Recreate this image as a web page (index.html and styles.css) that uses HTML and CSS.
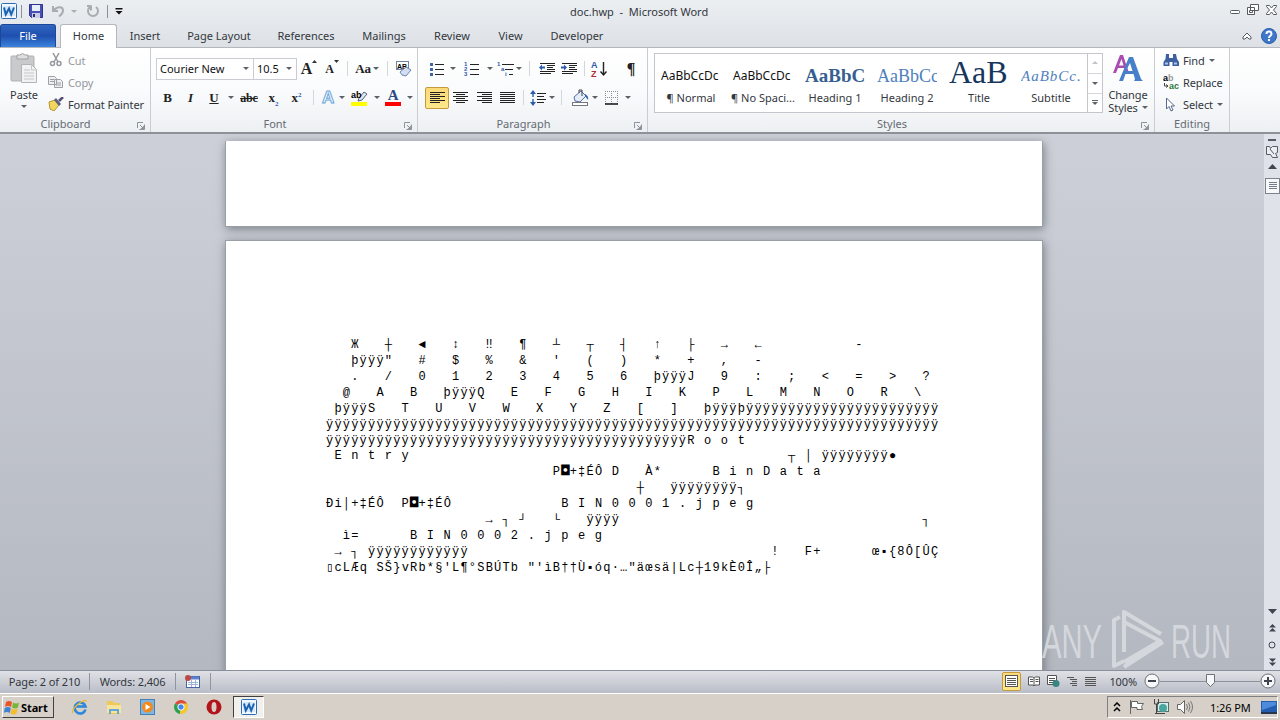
FILE: index.html
```html
<!DOCTYPE html>
<html lang="en">
<head>
    <meta charset="UTF-8">
    <title>doc.hwp - Microsoft Word</title>
    <link rel="stylesheet" href="styles.css">
</head>
<body>
    <svg class="defs" width="0" height="0">
        <symbol id="word" viewBox="0 0 16 16">
            <rect x="0.5" y="0.5" width="15" height="15" rx="1" fill="#f4f9ff" stroke="#2b6cb5"/>
            <path d="M2 3h11l1 1v9H2z" fill="#d5e8fa"/>
            <path d="M3 4.500l1.800 7L8 5.500l2.200 6L13 4.500" fill="none" stroke="#1a62b3" stroke-width="2"/>
        </symbol>
        <symbol id="launcher" viewBox="0 0 8 8">
            <path d="M0.500 6V0.500H6M3 3l3 3M7.500 2.500v5h-5" fill="none" stroke="#8d939b"/>
            <path d="M7 3.500V7H3.500z" fill="#8d939b"/>
        </symbol>
    </svg>

    <div class="titlebar">
        <svg class="app" width="16" height="16"><use href="#word"/></svg>
        <i class="vbar"></i>
        <svg class="save" width="14" height="14" viewBox="0 0 14 14">
            <path d="M0.500 0.500h13v13h-11l-2-2z" fill="#4750b5" stroke="#30358c"/>
            <rect x="3" y="1" width="8" height="6" fill="#e9effa"/>
            <rect x="3" y="9" width="8" height="5" fill="#c8cbe4"/>
            <rect x="4" y="10" width="2" height="3" fill="#282d75"/>
        </svg>
        <svg class="undo" width="14" height="14" viewBox="0 0 14 14">
            <path d="M1 2v5h5M1.500 6.500C5 2 11 2 11 6.500c0 3-2 4.500-4 6" fill="none" stroke="#a9adb2" stroke-width="2"/>
        </svg>
        <i class="caret light"></i>
        <svg class="redo" width="14" height="14" viewBox="0 0 14 14">
            <path d="M4 3a5 5 0 1 0 6 0M5 2h-4M5 1.500v5" fill="none" stroke="#a9adb2" stroke-width="2"/>
        </svg>
        <i class="vbar"></i>
        <svg width="8" height="7" viewBox="0 0 8 7"><path d="M0.500 0h7v1.500h-7zM0.500 3h7L4 6.500z" fill="#111"/></svg>
        <div class="title">doc.hwp&nbsp; - &nbsp;Microsoft Word</div>
        <svg class="win" width="48" height="12" viewBox="0 0 48 12">
            <g fill="#fff" stroke="#555a63">
                <rect x="1.500" y="6.500" width="9" height="3" rx="1"/>
                <path d="M21.500 0.500h8v6h-8zM18.500 3.500h7v7h-7zM20.500 6.500h3v2h-3z"/>
                <path d="M37.500 1.500h3l2 2.500 2-2.500h3v1l-3 3.500 3 3.500v1h-3l-2-2.500-2 2.500h-3v-1l3-3.500-3-3.500z"/>
            </g>
        </svg>
    </div>

    <div class="tabs">
        <div class="file">File</div>
        <div class="tab active">Home</div>
        <div class="tab insert">Insert</div>
        <div class="tab layout">Page Layout</div>
        <div class="tab refs">References</div>
        <div class="tab mail">Mailings</div>
        <div class="tab review">Review</div>
        <div class="tab view">View</div>
        <div class="tab dev">Developer</div>
        <div class="tab-end">
            <svg width="10" height="8" viewBox="0 0 10 8"><path d="M1 5l4-4 4 4v2H7L5 5 3 7H1z" fill="#fff" stroke="#555a63"/></svg>
            <svg width="16" height="16" viewBox="0 0 16 16">
                <circle cx="8" cy="8" r="7.500" fill="#3f77cb" stroke="#2b5dab"/>
                <path d="M5.500 6c0-3.300 5-3.300 5 0 0 1.800-2.500 1.800-2.500 4M8 11v2" fill="none" stroke="#fff" stroke-width="2"/>
            </svg>
        </div>
    </div>

    <div class="ribbon">
        <div class="group clipboard">
            <div class="body">
                <div class="paste">
                    <svg width="28" height="32" viewBox="0 0 28 32">
                        <rect x="1" y="3" width="23" height="25" rx="1" fill="#c9cacc" stroke="#b0b1b4"/>
                        <path d="M7 2h3q2.500-3 5 0h3v4H7z" fill="#dedfe1" stroke="#a0a1a4"/>
                        <path d="M11.500 11.500h10l5 5v13h-15z" fill="#f2f2f3" stroke="#b3b4b7"/>
                        <path d="M14 17h6M14 20h10M14 23h10M14 26h10M21.500 12v5h5" fill="none" stroke="#c5c6c9"/>
                    </svg>
                    <span>Paste</span>
                    <i class="caret"></i>
                </div>
                <div class="clip-list">
                    <div class="off">
                        <svg width="16" height="14" viewBox="0 0 16 14"><g fill="none" stroke="#95989d" stroke-width="1.500"><path d="M5 0l5 9M11 0L6 9"/><circle cx="4.500" cy="10.500" r="2"/><circle cx="11" cy="10.500" r="2"/></g></svg>
                        Cut
                    </div>
                    <div class="off">
                        <svg width="16" height="14" viewBox="0 0 16 14"><g fill="#f0f0f1" stroke="#9da0a5"><path d="M0.500 1.500h6l2 2v6h-8zM6.500 4.500h6l2 2v6h-8z"/><path d="M2 4.500h4M2 6.500h4M8 8h5M8 10h5"/></g></svg>
                        Copy
                    </div>
                    <div>
                        <svg width="16" height="14" viewBox="0 0 16 14"><path d="M1 5l6-2 4 5-5 6-4-2z" fill="#f3d65c" stroke="#b79431"/><path d="M6 3l2-2 5 6-2 2z" fill="#5b5e85"/><path d="M11 4l4-4" stroke="#554f74" stroke-width="2.500"/></svg>
                        Format Painter
                    </div>
                </div>
            </div>
            <div class="caption">Clipboard<svg width="8" height="8"><use href="#launcher"/></svg></div>
        </div>

        <div class="group font">
            <div class="body rows">
                <div class="row font-top">
                    <div class="combo">Courier New<i class="caret"></i></div>
                    <div class="combo">10.5<i class="caret"></i></div>
                    <span class="glyph grow">A<svg width="5" height="3" viewBox="0 0 5 3"><path d="M0 3h5L2.500 0z" fill="#333"/></svg></span>
                    <span class="glyph shrink">A<svg width="5" height="3" viewBox="0 0 5 3"><path d="M0 0h5L2.500 3z" fill="#333"/></svg></span>
                    <i class="sep"></i>
                    <span class="glyph case">Aa<i class="caret"></i></span>
                    <i class="sep"></i>
                    <svg width="17" height="17" viewBox="0 0 17 17">
                        <rect x="1.500" y="1.500" width="12" height="8" fill="#fff" stroke="#6f85a7"/>
                        <text x="2" y="8.500" class="tiny">AB</text>
                        <path d="M5 12l6-5 5 3-5 6-4-1z" fill="#d3dff1" stroke="#6c85b3"/>
                    </svg>
                </div>
                <div class="row font-bottom">
                    <span class="glyph bold">B</span>
                    <span class="glyph italic">I</span>
                    <span class="glyph under">U</span>
                    <i class="caret"></i>
                    <span class="glyph strike">abc</span>
                    <span class="glyph script">x<sub>2</sub></span>
                    <span class="glyph script">x<sup>2</sup></span>
                    <i class="sep"></i>
                    <span class="glyph effects">A</span>
                    <i class="caret"></i>
                    <svg width="17" height="18" viewBox="0 0 17 18">
                        <path d="M8 9l5-6 3 2-5 6-4 1z" fill="#dfe5ee" stroke="#56627a"/>
                        <text x="0" y="9" class="ab">ab</text>
                        <rect x="0" y="13" width="16" height="4" fill="#ff0"/>
                    </svg>
                    <i class="caret"></i>
                    <span class="glyph color">A</span>
                    <i class="caret"></i>
                </div>
            </div>
            <div class="caption">Font<svg width="8" height="8"><use href="#launcher"/></svg></div>
        </div>

        <div class="group para">
            <div class="body rows">
                <div class="row para-top">
                    <svg width="14" height="14" viewBox="0 0 14 14"><path d="M5 2.500h9M5 7.500h9M5 12.500h9" stroke="#222"/><path d="M0 1h3v3H0zM0 6h3v3H0zM0 11h3v3H0z" fill="#40649f"/></svg>
                    <i class="caret"></i>
                    <svg width="15" height="15" viewBox="0 0 15 15"><path d="M6 3.500h9M6 8.500h9M6 13.500h9" stroke="#222"/><text x="0" y="5" class="num">1</text><text x="0" y="10" class="num">2</text><text x="0" y="15" class="num">3</text></svg>
                    <i class="caret"></i>
                    <svg width="17" height="15" viewBox="0 0 17 15"><path d="M5 3.500h12M8 8.500h8M12 13.500h4" stroke="#222"/><text x="0" y="5" class="num">1</text><text x="4" y="10" class="num">a</text><text x="8" y="15" class="num">i</text></svg>
                    <i class="caret"></i>
                    <i class="sep"></i>
                    <svg width="16" height="13" viewBox="0 0 16 13"><path d="M1 1.500h15M8 3.500h8M8 5.500h6M8 7.500h8M1 9.500h15M1 11.500h11" stroke="#222"/><path d="M0 5.500l3-3v2h3v2H3v2z" fill="#2c5cab"/></svg>
                    <svg width="16" height="13" viewBox="0 0 16 13"><path d="M1 1.500h15M8 3.500h8M8 5.500h6M8 7.500h8M1 9.500h15M1 11.500h11" stroke="#222"/><path d="M6 5.500l-3-3v2H0v2h3v2z" fill="#2c5cab"/></svg>
                    <i class="sep"></i>
                    <svg width="16" height="16" viewBox="0 0 16 16"><text x="0" y="7" class="az a">A</text><text x="0" y="16" class="az z">Z</text><path d="M12.500 1v12M9.500 10.500l3 3.500 3-3.500" fill="none" stroke="#222" stroke-width="1.400"/></svg>
                    <i></i>
                    <span class="glyph pilcrow">¶</span>
                </div>
                <div class="row para-bottom">
                    <span class="picked"><svg width="15" height="13" viewBox="0 0 15 13"><path d="M0 1.500h15M0 3.500h10M0 5.500h15M0 7.500h10M0 9.500h15M0 11.500h10" stroke="#222"/></svg></span>
                    <svg width="15" height="13" viewBox="0 0 15 13"><path d="M0 1.500h15M3 3.500h9M0 5.500h15M3 7.500h9M0 9.500h15M3 11.500h9" stroke="#222"/></svg>
                    <svg width="15" height="13" viewBox="0 0 15 13"><path d="M0 1.500h15M5 3.500h10M0 5.500h15M5 7.500h10M0 9.500h15M5 11.500h10" stroke="#222"/></svg>
                    <svg width="15" height="13" viewBox="0 0 15 13"><path d="M0 1.500h15M0 3.500h15M0 5.500h15M0 7.500h15M0 9.500h15M0 11.500h15" stroke="#222"/></svg>
                    <i class="sep"></i>
                    <svg width="16" height="16" viewBox="0 0 16 16"><path d="M7 3.500h9M7 6.500h7M7 9.500h9M7 12.500h7" stroke="#222"/><path d="M3 0l3 4H0zM3 16l3-4H0zM2.300 4h1.400v3H2.300zM2.300 9h1.400v3H2.300z" fill="#2c5cab"/></svg>
                    <i class="caret"></i>
                    <i class="sep"></i>
                    <svg width="17" height="17" viewBox="0 0 17 17"><path d="M2 8l7-6 5 5-6 6-5-1z" fill="#e4edf9" stroke="#53709f"/><path d="M7 4V1h3v6" fill="none" stroke="#444"/><path d="M13 5q4 2 3 6l-3-4z" fill="#2f62b3"/><rect x="0.500" y="13.500" width="15" height="3" fill="#fff" stroke="#777"/></svg>
                    <i class="caret"></i>
                    <svg width="14" height="14" viewBox="0 0 14 14"><path d="M0.500 0v13M6.500 0v13M12.500 0v13M0 0.500h13M0 6.500h13" stroke="#8b8f95" stroke-dasharray="1 1"/><path d="M0 13h13" stroke="#111" stroke-width="1.500"/></svg>
                    <i class="caret"></i>
                </div>
            </div>
            <div class="caption">Paragraph<svg width="8" height="8"><use href="#launcher"/></svg></div>
        </div>

        <div class="group styles">
            <div class="body">
                <div class="gallery">
                    <div class="style"><b class="s-normal">AaBbCcDc</b><span>¶ Normal</span></div>
                    <div class="style"><b class="s-normal">AaBbCcDc</b><span>¶ No Spaci...</span></div>
                    <div class="style"><b class="s-h1">AaBbCc</b><span>Heading 1</span></div>
                    <div class="style"><b class="s-h2">AaBbCc</b><span>Heading 2</span></div>
                    <div class="style"><b class="s-title">AaB</b><span>Title</span></div>
                    <div class="style"><b class="s-sub">AaBbCc.</b><span>Subtitle</span></div>
                    <div class="scroller">
                        <div><i class="caret up"></i></div>
                        <div><i class="caret"></i></div>
                        <div class="more"><i class="caret"></i></div>
                    </div>
                </div>
                <div class="change">
                    <svg width="30" height="29" viewBox="0 0 30 29">
                        <path d="M0 19L7 1h3l6 18h-3.500l-1.500-5H5l-2 5zM6 11.500h4.500L8.500 5z" fill="#a94bb0"/>
                        <path d="M6 27L16 3h4l8 22 2 2h-9l1-2-1.500-5h-8L10 27zM13 17h6.500L17 9z" fill="#477fcb"/>
                    </svg>
                    <span>Change</span>
                    <span>Styles <i class="caret"></i></span>
                </div>
            </div>
            <div class="caption">Styles<svg width="8" height="8"><use href="#launcher"/></svg></div>
        </div>

        <div class="group editing">
            <div class="body">
                <div class="edit-list">
                    <div>
                        <svg width="16" height="14" viewBox="0 0 16 14"><path d="M3 1h3v4h4V1h3l1 5 2 3v4H9.500V9h-3v4H0.500V9l2-3z" fill="#3c60a0"/><path d="M2 9.500h3v2H2zM11 9.500h3v2h-3z" fill="#a9c4ee"/></svg>
                        Find <i class="caret"></i>
                    </div>
                    <div>
                        <svg width="16" height="16" viewBox="0 0 16 16"><text x="0" y="7" class="rep">a<tspan fill="#999">b</tspan></text><text x="6" y="15" class="rep green">ac</text><path d="M1.500 9v3h3M3 10.500l2 1.500-2 1.500" fill="none" stroke="#444"/></svg>
                        Replace
                    </div>
                    <div>
                        <svg width="16" height="15" viewBox="0 0 16 15"><path d="M3.500 1v11l2.500-2.500 2 4.500 2-1-2-4h3.500z" fill="#fff" stroke="#54698c"/></svg>
                        Select <i class="caret"></i>
                    </div>
                </div>
            </div>
            <div class="caption">Editing</div>
        </div>
    </div>

    <div class="workspace">
        <div class="canvas">
            <div class="page first"></div>
            <div class="page second">
<pre>   Ж   ┼   ◄   ↕   ‼   ¶   ┴   ┬   ┤   ↑   ├   →   ←           -
   þÿÿÿ"   #   $   %   &amp;   '   (   )   *   +   ,   -
   .   /   0   1   2   3   4   5   6   þÿÿÿJ   9   :   ;   &lt;   =   &gt;   ?
  @   A   B   þÿÿÿQ   E   F   G   H   I   K   P   L   M   N   O   R   \
 þÿÿÿS   T   U   V   W   X   Y   Z   [   ]   þÿÿÿþÿÿÿÿÿÿÿÿÿÿÿÿÿÿÿÿÿÿÿÿÿÿÿ
ÿÿÿÿÿÿÿÿÿÿÿÿÿÿÿÿÿÿÿÿÿÿÿÿÿÿÿÿÿÿÿÿÿÿÿÿÿÿÿÿÿÿÿÿÿÿÿÿÿÿÿÿÿÿÿÿÿÿÿÿÿÿÿÿÿÿÿÿÿÿÿÿÿ
ÿÿÿÿÿÿÿÿÿÿÿÿÿÿÿÿÿÿÿÿÿÿÿÿÿÿÿÿÿÿÿÿÿÿÿÿÿÿÿÿÿÿÿR o o t
 E n t r y                                             ┬ │ ÿÿÿÿÿÿÿÿ●
                           P<b>◘</b>+‡ÉÔ D   À*      B i n D a t a
                                     ┼   ÿÿÿÿÿÿÿÿ┐
Ði│+‡ÉÔ  P<b>◘</b>+‡ÉÔ             B I N 0 0 0 1 . j p e g
                   → ┐ ┘   └   ÿÿÿÿ                                    ┐
  ì=      B I N 0 0 0 2 . j p e g
 → ┐ ÿÿÿÿÿÿÿÿÿÿÿÿ                                    !   F+      œ▪{8Ô[ÛÇ
▯cLÆq SŠ}vRb*§′L¶°SBÚTb "′ìB††Ù▪óq·…"äœsä|Lc┼19kÈ0Î„├</pre>
            </div>
            <svg class="watermark" width="200" height="64" viewBox="0 0 200 64">
                <text x="2" y="50" textLength="60" lengthAdjust="spacingAndGlyphs">ANY</text>
                <text x="131" y="50" textLength="60" lengthAdjust="spacingAndGlyphs">RUN</text>
                <g fill="none" stroke="#dadde1" stroke-width="4" stroke-linejoin="round">
                    <path d="M80 9l-6 3v46l10-5"/>
                    <path d="M121 26L84 4v40M84 14l36 19-36 21M123 34L84 59"/>
                </g>
            </svg>
        </div>
        <div class="scrollbar">
            <i class="split"></i>
            <svg width="12" height="13" viewBox="0 0 12 13"><path d="M0.500 1.500h3l1 2 2-2h5v6l-2 1 2 4h-5l-2-3H0.500zM4 4l4 5" fill="#eceef2" stroke="#565b66"/></svg>
            <svg class="up" width="9" height="5"><path d="M0 5h9L4.500 0z" fill="#40454f"/></svg>
            <svg class="thumb" width="15" height="16" viewBox="0 0 15 16"><rect x="0.500" y="0.500" width="14" height="15" fill="#f7f8fa" stroke="#7d828d"/><path d="M4 4.500h8M4 6.500h8M4 8.500h8M4 10.500h8" stroke="#777d88"/></svg>
            <div class="nav">
                <svg width="9" height="5"><path d="M0 0h9L4.500 5z" fill="#40454f"/></svg>
                <svg width="7" height="8" viewBox="0 0 7 8"><path d="M0 3.500h7L3.500 0zM0 7.500h7L3.500 4z" fill="#40454f"/></svg>
                <svg width="8" height="8"><circle cx="4" cy="4" r="3" fill="#dfe2e8" stroke="#40454f"/></svg>
                <svg width="7" height="8" viewBox="0 0 7 8"><path d="M0 0.500h7L3.500 4zM0 4.500h7L3.500 8z" fill="#40454f"/></svg>
            </div>
        </div>
    </div>

    <div class="statusbar">
        <span class="cell pages">Page: 2 of 210</span>
        <span class="cell words">Words: 2,406</span>
        <span class="cell macro">
            <svg width="16" height="13" viewBox="0 0 16 13"><rect x="1.500" y="1.500" width="13" height="11" fill="#fff" stroke="#4763a5"/><path d="M2 3h12" stroke="#5b7fcf" stroke-width="3"/><path d="M3 7.500h10M3 9.500h10M6.500 5v7M10.500 5v7" stroke="#9fb2da"/><circle cx="3" cy="3" r="3" fill="#bb4a44"/></svg>
        </span>
        <div class="views">
            <span class="picked"><svg width="13" height="12" viewBox="0 0 13 12"><rect x="0.500" y="0.500" width="12" height="11" fill="#fff" stroke="#555"/><path d="M2 3.500h9M2 5.500h9M2 7.500h9M2 9.500h9" stroke="#555"/></svg></span>
            <svg width="12" height="11" viewBox="0 0 12 11"><path d="M0.500 1h4L6 2l1.500-1h4v8H7L6 10 5 9H0.500zM6 2v8M2 3.500h3M2 5.500h3M7.500 3.500h3M7.500 5.500h3" fill="#fff" stroke="#555"/></svg>
            <svg width="13" height="12" viewBox="0 0 13 12"><path d="M0.500 0.500h9v9h-9zM2 3.500h6M2 5.500h6M2 7.500h4" fill="#fff" stroke="#555"/><circle cx="9" cy="8.500" r="3.500" fill="#37867f"/></svg>
            <svg width="11" height="9" viewBox="0 0 11 9"><path d="M0 0.500h7M3 2.500h7M5 4.500h5M3 6.500h7M5 8.500h5" stroke="#555"/></svg>
            <svg width="11" height="9" viewBox="0 0 11 9"><path d="M0 0.500h11M0 2.500h11M0 4.500h11M0 6.500h11M0 8.500h11" stroke="#555"/></svg>
        </div>
        <span class="percent">100%</span>
        <svg class="zoom" width="132" height="18" viewBox="0 0 132 18">
            <path d="M16 9.500h100" stroke="#8c919b"/>
            <g fill="#f6f7f9" stroke="#6b7079"><circle cx="8" cy="9" r="7"/><circle cx="124" cy="9" r="7"/><path d="M62.500 2.500h8v8l-4 4-4-4z"/></g>
            <path d="M4 9h8M120 9h8M124 5v8" stroke="#3f444d" stroke-width="2"/>
        </svg>
    </div>

    <div class="taskbar">
        <div class="start">
            <svg width="16" height="15" viewBox="0 0 16 15"><path d="M2 2q3-2 6 0l-1 5q-3-2-6 0z" fill="#e8542c"/><path d="M9 2.500q3 2 6 0l-1 5q-3 2-6 0z" fill="#79b637"/><path d="M0.800 8q3-2 6 0l-1 5q-3-2-6 0z" fill="#3f82d3"/><path d="M7.600 8.500q3 2 6 0l-1 5q-3 2-6 0z" fill="#f5bd2c"/></svg>
            Start
        </div>
        <div class="launch">
            <svg width="16" height="16" viewBox="0 0 16 16"><path d="M13.500 10.500A5.500 5.500 0 1 1 13.500 7.500H4" fill="none" stroke="#2a87dc" stroke-width="2.600"/><path d="M1 14C-1 10 10 0 15 2" fill="none" stroke="#eeb72e" stroke-width="1.300"/></svg>
            <svg width="16" height="16" viewBox="0 0 16 16"><path d="M1 2h6l1 2h6v11H1z" fill="#edc95a"/><path d="M1 6h14v8H1z" fill="#f9e499"/><path d="M3 15v-5h10v5h-2v-3H5v3z" fill="#63a8dc"/></svg>
            <svg width="16" height="16" viewBox="0 0 16 16"><rect x="0.500" y="0.500" width="14" height="15" fill="#7fb5e4" stroke="#4581b9"/><circle cx="7.500" cy="8" r="5.500" fill="#f08a1c"/><path d="M5.500 5v6l5-3z" fill="#fff"/></svg>
            <svg width="14" height="14" viewBox="0 0 14 14"><path d="M7 7L1 3.500A7 7 0 0 1 13 3.500z" fill="#dd4b3e"/><path d="M7 7h6.500a7 7 0 0 0-.5-3.500H7z" fill="#dd4b3e"/><path d="M7 7L1 3.500A7 7 0 0 0 6 14z" fill="#2fa04f"/><path d="M7 7l-1 7A7 7 0 0 0 13 3.500H8z" fill="#f6c62d"/><circle cx="7" cy="7" r="3.200" fill="#4687ec" stroke="#fff"/></svg>
            <svg width="16" height="16" viewBox="0 0 16 16"><circle cx="8" cy="8" r="7.500" fill="#b3141b"/><ellipse cx="8" cy="8" rx="2.500" ry="5" fill="#d8d0c8"/></svg>
        </div>
        <div class="task"><svg width="16" height="16"><use href="#word"/></svg></div>
        <div class="tray">
            <svg width="8" height="10" viewBox="0 0 8 10"><path d="M1 4l3-3 3 3M1 9l3-3 3 3" fill="none" stroke="#000" stroke-width="1.500"/></svg>
            <svg width="16" height="14" viewBox="0 0 16 14"><path d="M1.500 0v14" stroke="#666"/><path d="M2.500 1.500h6v2h6l-2 3 1 3H8v-2H2.500z" fill="#fff" stroke="#666"/></svg>
            <svg width="16" height="16" viewBox="0 0 16 16"><rect x="4.500" y="3.500" width="11" height="9" fill="#d6efed" stroke="#5a6c6e"/><circle cx="10" cy="9" r="4" fill="#47a79c"/><path d="M1.500 0v5h4V0M3.500 5v9M2 14.500h10" fill="none" stroke="#444"/></svg>
            <svg width="16" height="14" viewBox="0 0 16 14"><path d="M0.500 4.500h3l4-4v13l-4-4h-3z" fill="#fff" stroke="#666"/><path d="M9.500 4q2 3 0 6M11.500 2.500q3 4.500 0 9M13.500 1q4 6 0 12" fill="none" stroke="#777"/></svg>
            <span>1:26 PM</span>
            <svg width="16" height="13" viewBox="0 0 16 13"><rect x="0" y="0" width="16" height="11" fill="#245dae"/><path d="M1 1h14v3L1 9z" fill="#4f8bdd"/><path d="M0 12h16" stroke="#27374f" stroke-width="2"/></svg>
        </div>
    </div>
</body>
</html>
```
FILE: styles.css
```css
* {
    margin: 0;
    padding: 0;
    box-sizing: border-box;
}

body {
    width: 1280px;
    height: 720px;
    overflow: hidden;
    display: flex;
    flex-direction: column;
    font-family: "Noto Sans", "Open Sans", sans-serif;
    font-size: 11px;
    letter-spacing: -0.100px;
    color: #33373d;
    background: #e2e5e9;
}

svg {
    display: block;
    flex: none;
}

.defs {
    display: none;
}

.caret {
    display: inline-block;
    flex: none;
    border: 3px solid transparent;
    border-top-color: #5c6067;
    border-bottom: 0;
}

.caret.light {
    border-top-color: #a9adb2;
}

.caret.up {
    border-top: 0;
    border-bottom: 3px solid #c0c3c8;
}

/* title bar */
.titlebar {
    height: 24px;
    display: flex;
    align-items: center;
    padding: 0 3px 2px 1px;
    background: linear-gradient(#eceff2, #e4e7eb);
}

.vbar {
    width: 1px;
    height: 13px;
    margin: 0 7px 0 4px;
    background: #8c9097;
}

.undo {
    margin: 0 5px 0 9px;
}

.redo {
    margin: 0 3px 0 9px;
}

.title {
    flex: 1;
    padding-left: 447px;
    letter-spacing: 0;
    white-space: nowrap;
}

.win {
    margin-bottom: 3px;
}

/* tabs */
.tabs {
    height: 24px;
    display: flex;
    line-height: 23px;
    letter-spacing: 0;
    background: linear-gradient(#e4e7eb, #dde1e5);
    border-bottom: 1px solid #b4b8be;
}

.file {
    width: 56px;
    border: 1px solid #1d479b;
    border-bottom: 0;
    border-radius: 3px 3px 0 0;
    color: #fff;
    line-height: 22px;
    text-align: center;
    background: linear-gradient(#2f66bf, #1f4fae 50%, #3b84de);
}

.tab {
    text-align: center;
    white-space: nowrap;
}

.active {
    width: 57px;
    height: 24px;
    margin-left: 4px;
    border: 1px solid #b4b8be;
    border-bottom: 0;
    border-radius: 3px 3px 0 0;
    line-height: 22px;
    background: #fff;
}

.insert { width: 56px; }
.layout { width: 92px; }
.refs { width: 82px; }
.mail { width: 74px; }
.review { width: 62px; }
.view { width: 55px; }
.dev { width: 78px; }

.tab-end {
    margin-left: auto;
    display: flex;
    align-items: center;
    gap: 9px;
    padding-right: 3px;
}

/* ribbon */
.ribbon {
    height: 86px;
    display: flex;
    background: linear-gradient(#fff, #fafbfc 50%, #edf0f3);
    border-bottom: 2px solid #8d9299;
}

.group {
    display: flex;
    flex-direction: column;
    border-right: 1px solid #c9cdd3;
}

.body {
    height: 67px;
    flex: none;
    display: flex;
}

.caption {
    height: 17px;
    position: relative;
    line-height: 18px;
    letter-spacing: 0;
    text-align: center;
    color: #666b73;
}

.caption svg {
    position: absolute;
    right: 5px;
    top: 7px;
}

.clipboard { width: 151px; }
.font { width: 267px; }
.para { width: 230px; }
.styles { width: 507px; }
.editing { width: 75px; }

.clipboard .caption {
    padding-right: 19px;
}

.font .caption,
.para .caption,
.styles .caption {
    padding-right: 18px;
}

.paste {
    width: 48px;
    display: flex;
    flex-direction: column;
    align-items: center;
    padding-top: 5px;
}

.paste span {
    line-height: 15px;
    margin: 2px 0 3px;
}

.clip-list,
.edit-list {
    display: flex;
    flex-direction: column;
    padding-top: 1px;
}

.clip-list div,
.edit-list div {
    height: 22px;
    display: flex;
    align-items: center;
    gap: 4px;
    white-space: nowrap;
}

.off {
    color: #95989d;
}

.rows {
    flex-direction: column;
    padding: 9px 0 0 4px;
    gap: 6px;
}

.font .rows {
    padding-left: 5px;
}

.row {
    height: 23px;
    display: grid;
    align-items: center;
    justify-items: center;
}

.font-top {
    grid-template-columns: 98px 43px 24px 22px 8px 32px 8px 24px;
}

.font-bottom {
    grid-template-columns: 23px 23px 24px 10px 26px 23px 23px 10px 20px 7px 28px 7px 26px 7px;
}

.para-top {
    grid-template-columns: 24px 8px 28px 10px 20px 7px 14px 22px 22px 8px 22px 10px 22px;
    padding-left: 3px;
}

.para-bottom {
    grid-template-columns: 24px 23px 24px 23px 8px 22px 5px 14px 24px 6px 28px 3px;
    padding-left: 3px;
}

.combo {
    width: 100%;
    height: 22px;
    display: flex;
    align-items: center;
    justify-content: space-between;
    padding: 0 4px 0 3px;
    border: 1px solid #c9ccd2;
    letter-spacing: 0;
    background: #fff;
    color: #111;
}

.combo + .combo {
    border-left: 0;
}

.sep {
    width: 1px;
    height: 15px;
    background: #d3d6db;
}

.glyph {
    font-family: "Liberation Serif", serif;
    font-weight: bold;
    font-size: 13px;
    line-height: 18px;
    color: #222;
    white-space: nowrap;
}

.grow,
.shrink,
.case {
    display: flex;
    align-items: flex-start;
}

.grow { font-size: 16px; }
.shrink { font-size: 12px; }

.case {
    align-items: center;
    gap: 2px;
}

.italic { font-style: italic; }
.under { text-decoration: underline; }

.strike {
    font-size: 12px;
    text-decoration: line-through;
}

.script sub,
.script sup {
    font-size: 7px;
    line-height: 0;
    color: #2a5db0;
}

.effects {
    font-family: "Liberation Sans", sans-serif;
    font-size: 17px;
    color: #fff;
    -webkit-text-stroke: 1px #69a5d8;
}

.color {
    width: 16px;
    height: 17px;
    line-height: 13px;
    font-size: 15px;
    text-align: center;
    color: #2c4a83;
    border-bottom: 4px solid #f00;
}

.pilcrow {
    font-size: 16px;
}

.tiny {
    font: bold 7px "Liberation Sans", sans-serif;
}

.ab {
    font: bold 9px "Liberation Sans", sans-serif;
}

.num {
    font: bold 6px "Liberation Sans", sans-serif;
    fill: #2c5cab;
}

.az {
    font: bold 9px "Liberation Sans", sans-serif;
}

.a { fill: #2c5cab; }
.z { fill: #b1302c; }

.rep {
    font: bold 9px "Liberation Sans", sans-serif;
}

.green {
    fill: #2c7a3b;
}

.picked {
    width: 24px;
    height: 22px;
    display: flex;
    align-items: center;
    justify-content: center;
    border: 1px solid #c39a3c;
    border-radius: 2px;
    background: linear-gradient(#fbd978, #ffe88a);
}

/* style gallery */
.gallery {
    width: 449px;
    height: 60px;
    margin: 5px 0 0 6px;
    display: flex;
    letter-spacing: 0;
    border: 1px solid #c3c7cd;
    background: #fff;
}

.style {
    width: 72px;
    display: flex;
    flex-direction: column;
    align-items: center;
}

.style b {
    width: 60px;
    height: 36px;
    line-height: 44px;
    overflow: hidden;
    white-space: nowrap;
    font-weight: normal;
    color: #111;
}

.style span {
    line-height: 16px;
    white-space: nowrap;
}

.s-normal {
    font-size: 12px;
}

.style .s-h1 {
    font: bold 19px/44px "Liberation Serif", serif;
    color: #365f91;
}

.style .s-h2 {
    font: 18px/44px "Liberation Serif", serif;
    color: #4f81bd;
}

.style .s-title {
    font: 32px/36px "Liberation Serif", serif;
    color: #17365d;
}

.style .s-sub {
    font: italic 15px/44px "Liberation Serif", serif;
    letter-spacing: 1px;
    color: #4f81bd;
}

.scroller {
    width: 15px;
    border-left: 1px solid #c3c7cd;
}

.scroller div {
    height: 20px;
    display: flex;
    align-items: center;
    justify-content: center;
    border-bottom: 1px solid #d3d6db;
}

.scroller .more {
    height: 18px;
    border: 0;
}

.more::before {
    content: "";
    width: 6px;
    height: 1px;
    margin: -6px -6px 0 0;
    background: #5c6067;
}

.change {
    width: 50px;
    display: flex;
    flex-direction: column;
    align-items: center;
    padding-top: 6px;
}

.change span {
    line-height: 13px;
    display: flex;
    align-items: center;
    gap: 4px;
}

.change svg {
    margin-bottom: 5px;
}

.edit-list {
    padding-left: 8px;
}

/* document */
.workspace {
    height: 536px;
    display: flex;
    background: linear-gradient(#cdd0d8, #b4b8c0);
}

.canvas {
    width: 1264px;
    position: relative;
    padding: 7px 0 0 225px;
    overflow: hidden;
}

.page {
    width: 818px;
    border: 1px solid #9a9ea5;
    background: #fff;
    box-shadow: 1px 2px 9px rgba(70, 75, 80, 0.6);
}

.first {
    height: 86px;
    border-top: 0;
}

.second {
    height: 450px;
    margin-top: 13px;
    padding: 97px 0 0 100px;
}

pre {
    font: 12px/15.920px "Liberation Mono", monospace;
    letter-spacing: 1.200px;
    color: #000;
}

pre b {
    font: 14px/0 "DejaVu Sans Mono", monospace;
    letter-spacing: 0;
}

.watermark {
    position: absolute;
    left: 1040px;
    top: 474px;
    opacity: 0.850;
}

.watermark text {
    font: 48px "Liberation Sans Narrow", "Liberation Sans", sans-serif;
    fill: #dadde1;
}

.scrollbar {
    width: 16px;
    display: flex;
    flex-direction: column;
    align-items: center;
    background: #dfe2e8;
}

.split {
    width: 8px;
    height: 2px;
    margin: 5px 0 4px;
    background: #565b66;
}

.up {
    margin: 6px 0 9px;
}

.nav {
    margin-top: auto;
    display: flex;
    flex-direction: column;
    align-items: center;
    gap: 9px;
    padding-bottom: 4px;
}

.nav svg:first-child {
    margin-bottom: 1px;
}

/* status bar */
.statusbar {
    height: 23px;
    display: flex;
    align-items: center;
    padding-bottom: 2px;
    border-top: 1px solid #8a8f99;
    background: linear-gradient(#dfe1e6, #b9bdc6);
}

.cell {
    height: 17px;
    display: flex;
    align-items: center;
    justify-content: center;
    white-space: nowrap;
    border-right: 1px solid #8f949e;
}

.pages { width: 90px; }
.words { width: 86px; }
.macro { width: 35px; }

.views {
    margin-left: auto;
    display: flex;
    align-items: center;
    gap: 7px;
}

.views .picked {
    width: 19px;
    height: 19px;
}

.percent {
    margin: 0 7px 0 13px;
}

.zoom {
    margin-right: 4px;
}

/* taskbar */
.taskbar {
    height: 27px;
    display: flex;
    align-items: center;
    padding: 0 2px;
    border-top: 1px solid #fff;
    background: #d6d0c8;
    color: #000;
}

.start {
    width: 52px;
    height: 22px;
    display: flex;
    align-items: center;
    gap: 1px;
    padding-left: 1px;
    font-weight: bold;
    border: 1px solid;
    border-color: #fff #404040 #404040 #fff;
}

.launch {
    display: flex;
    align-items: center;
    gap: 18px;
    margin: 0 11px 0 18px;
}

.task {
    width: 31px;
    height: 22px;
    display: flex;
    align-items: center;
    justify-content: center;
    border: 1px solid;
    border-color: #404040 #fff #fff #404040;
    background: #f2f0ed;
}

.tray {
    width: 171px;
    height: 22px;
    margin-left: auto;
    display: flex;
    align-items: center;
    gap: 8px;
    padding-left: 5px;
    border: 1px solid;
    border-color: #808080 #fff #fff #808080;
}

.tray span {
    margin: 0 2px 0 9px;
    white-space: nowrap;
}
```
